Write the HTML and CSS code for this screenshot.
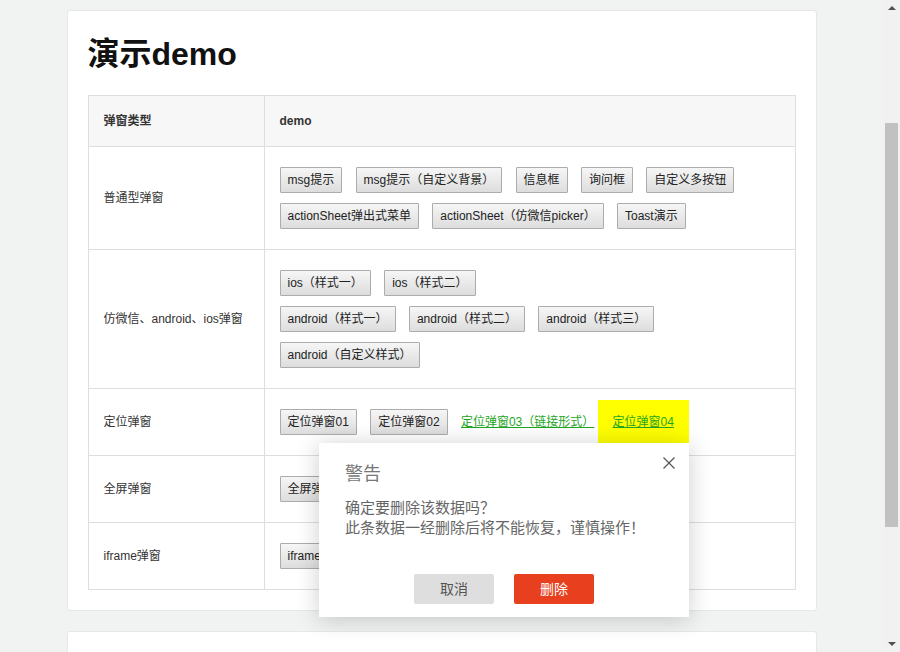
FILE: index.html
```html
<!DOCTYPE html>
<html lang="zh-CN">
<head>
<meta charset="utf-8">
<title>演示demo</title>
<link rel="stylesheet" href="styles.css">
</head>
<body>
<div class="page">
  <div class="card">
    <h1 class="title">演示demo</h1>
    <table class="demo-table">
      <thead>
        <tr><th class="col-type">弹窗类型</th><th>demo</th></tr>
      </thead>
      <tbody>
        <tr>
          <td class="col-type">普通型弹窗</td>
          <td class="btns">
            <button class="btn">msg提示</button>
            <button class="btn">msg提示（自定义背景）</button>
            <button class="btn">信息框</button>
            <button class="btn">询问框</button>
            <button class="btn">自定义多按钮</button>
            <button class="btn">actionSheet弹出式菜单</button>
            <button class="btn">actionSheet（仿微信picker）</button>
            <button class="btn">Toast演示</button>
          </td>
        </tr>
        <tr>
          <td class="col-type">仿微信、android、ios弹窗</td>
          <td class="btns">
            <button class="btn">ios（样式一）</button>
            <button class="btn">ios（样式二）</button><br>
            <button class="btn">android（样式一）</button>
            <button class="btn">android（样式二）</button>
            <button class="btn">android（样式三）</button><br>
            <button class="btn">android（自定义样式）</button>
          </td>
        </tr>
        <tr>
          <td class="col-type">定位弹窗</td>
          <td class="btns">
            <button class="btn">定位弹窗01</button>
            <button class="btn">定位弹窗02</button>
            <a class="link" href="#">定位弹窗03（链接形式）</a>
            <span class="anchor"><a class="link link-hl" href="#">定位弹窗04</a><div class="dialog">
                <div class="dialog-title">警告</div>
                <span class="dialog-close"><svg width="12" height="12" viewBox="0 0 12 12"><path d="M0.5 0.5L11.5 11.5M11.5 0.5L0.5 11.5" stroke="#555" stroke-width="1.2" fill="none"/></svg></span>
                <div class="dialog-body">确定要删除该数据吗？<br>此条数据一经删除后将不能恢复，谨慎操作！</div>
                <div class="dialog-foot">
                  <span class="dbtn dbtn-cancel">取消</span>
                  <span class="dbtn dbtn-ok">删除</span>
                </div>
              </div></span>
          </td>
        </tr>
        <tr>
          <td class="col-type">全屏弹窗</td>
          <td class="btns"><button class="btn">全屏弹窗</button></td>
        </tr>
        <tr>
          <td class="col-type">iframe弹窗</td>
          <td class="btns"><button class="btn">iframe弹窗</button></td>
        </tr>
      </tbody>
    </table>
  </div>
  <div class="card card-next"></div>
</div>
<div class="scrollbar">
  <span class="sb-arrow sb-up"></span>
  <span class="sb-thumb"></span>
  <span class="sb-arrow sb-down"></span>
</div>
</body>
</html>
```

FILE: styles.css
```css
html, body {
  margin: 0;
  padding: 0;
}
body {
  background: #f1f3f2;
  font-family: "Liberation Sans", Arial, "Noto Sans CJK SC", sans-serif;
  font-size: 12px;
  color: #333;
}
.page {
  margin-right: 17px;
  padding: 10px 0 20px;
}
.card {
  width: 708px;
  margin: 0 auto;
  background: #fff;
  border: 1px solid #e6e8e7;
  border-radius: 3px;
  padding: 20px;
}
.card-next {
  margin-top: 20px;
  height: 300px;
}
.title {
  margin: 0 0 18px;
  font-size: 32px;
  line-height: 46px;
  font-weight: bold;
  color: #111;
}
.demo-table {
  width: 100%;
  border-collapse: collapse;
  table-layout: fixed;
}
.demo-table th,
.demo-table td {
  border: 1px solid #dedede;
  padding: 15px;
  line-height: 20px;
  text-align: left;
  vertical-align: middle;
}
.demo-table th {
  background: #f7f7f7;
  font-weight: bold;
  color: #333;
}
.demo-table .col-type {
  width: 145px;
}
.btns {
  line-height: 20px;
}
.btn {
  display: inline-block;
  height: 26px;
  margin: 5px 10px 5px 0;
  padding: 0 7px;
  border: 1px solid #acacac;
  border-radius: 1px;
  background: linear-gradient(#f6f6f6, #dddddd);
  font-family: "Liberation Sans", Arial, "Noto Sans CJK SC", sans-serif;
  font-size: 12px;
  color: #222;
  line-height: 24px;
  box-sizing: border-box;
}
.link {
  color: #1fa61f;
  text-decoration: underline;
}
.anchor {
  position: relative;
}
.link-hl {
  background: #ffff00;
  padding: 15px;
}
.dialog {
  position: absolute;
  top: 28px;
  right: 0;
  width: 370px;
  box-sizing: border-box;
  padding: 20px 26px 13px;
  background: #fff;
  box-shadow: 0 2px 22px rgba(0, 0, 0, 0.2);
  z-index: 10;
  color: #666;
}
.dialog-title {
  font-size: 18px;
  line-height: 22px;
  color: #777;
}
.dialog-close {
  position: absolute;
  top: 14px;
  right: 14px;
  width: 12px;
  height: 12px;
  display: block;
}
.dialog-close svg {
  display: block;
}
.dialog-body {
  padding-top: 13px;
  font-size: 15px;
  line-height: 20px;
  color: #666;
}
.dialog-foot {
  display: flex;
  justify-content: center;
  gap: 20px;
  margin-top: 36px;
}
.dbtn {
  width: 80px;
  height: 30px;
  line-height: 30px;
  text-align: center;
  font-size: 14px;
  border-radius: 2px;
}
.dbtn-cancel {
  background: #dedede;
  color: #555;
}
.dbtn-ok {
  background: #e8401f;
  color: #fff;
}
.scrollbar {
  position: fixed;
  top: 0;
  right: 0;
  bottom: 0;
  width: 17px;
  background: #f1f1f1;
  display: flex;
  flex-direction: column;
  align-items: center;
}
.sb-arrow {
  width: 0;
  height: 0;
  border-left: 4px solid transparent;
  border-right: 4px solid transparent;
}
.sb-up {
  margin-top: 6px;
  border-bottom: 4px solid #505050;
}
.sb-thumb {
  width: 13px;
  height: 404px;
  margin-top: 113px;
  background: #c1c1c1;
}
.sb-down {
  margin-top: auto;
  margin-bottom: 6px;
  border-top: 4px solid #505050;
}
```
